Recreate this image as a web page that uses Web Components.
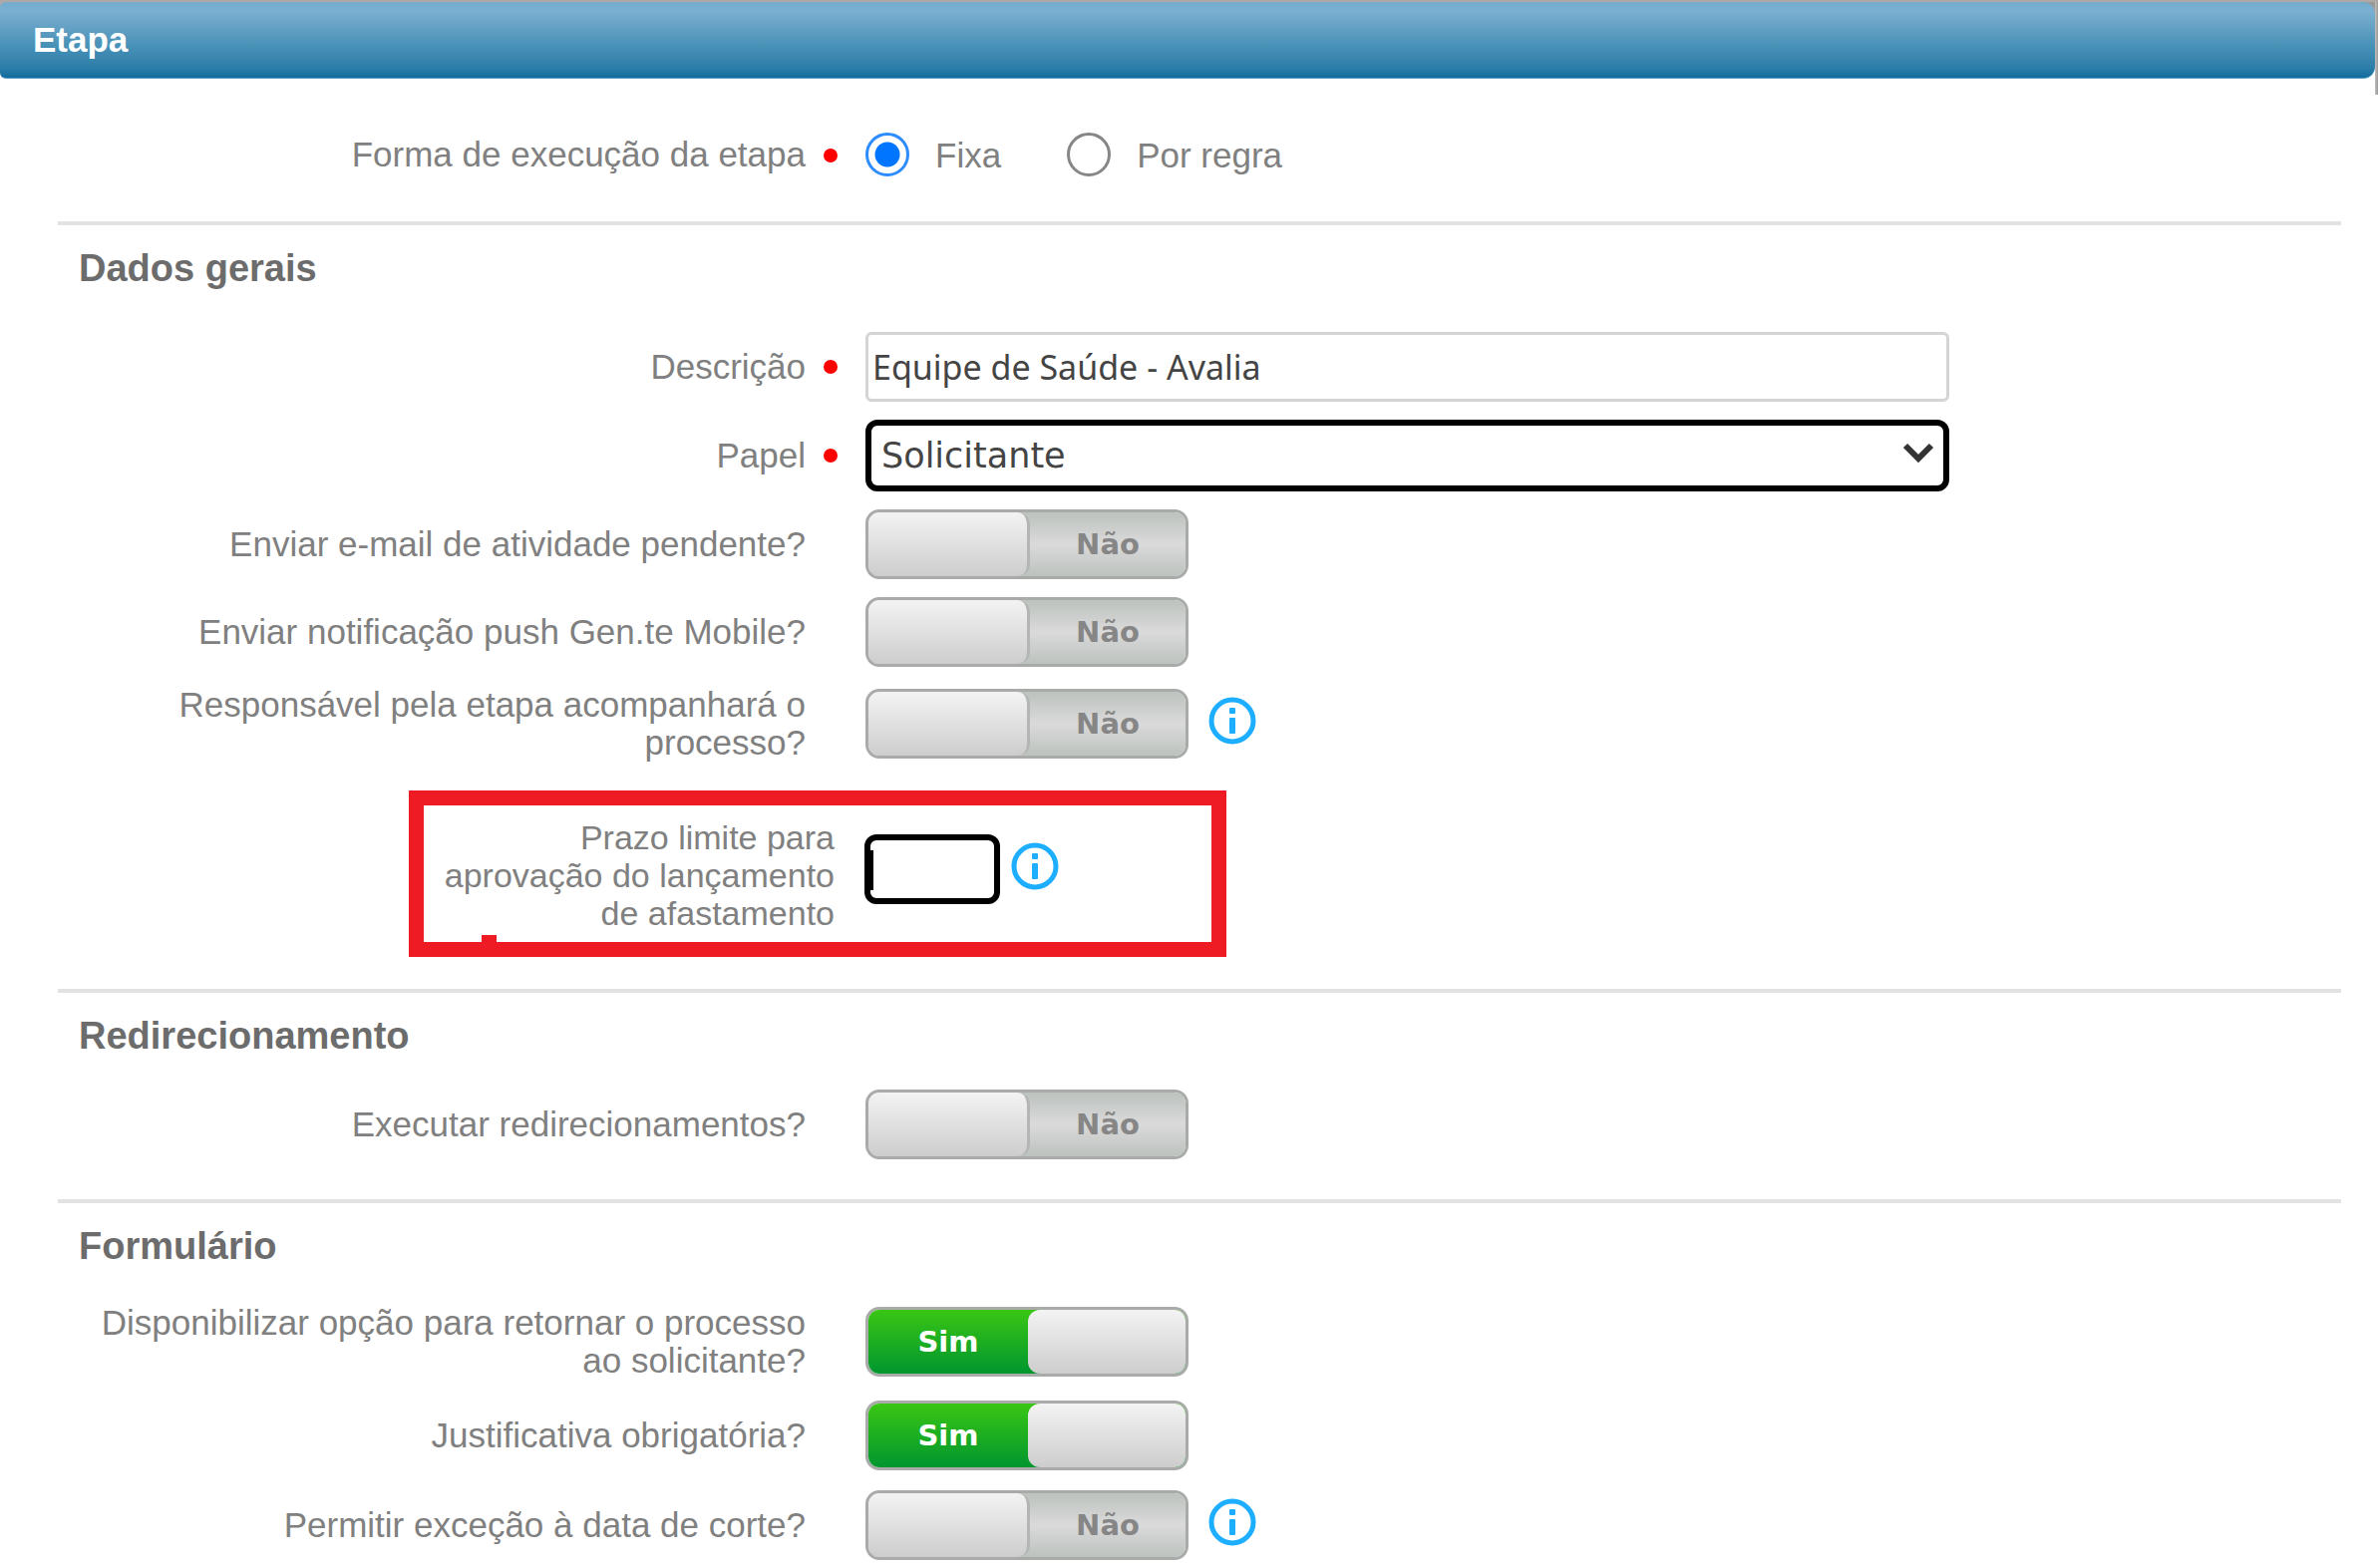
<!DOCTYPE html>
<html lang="pt-BR">
<head>
<meta charset="utf-8">
<title>Etapa</title>
<style>
  body {
    margin: 0;
    background: #fff;
    color: #808080;
    font: 35px/38px "Liberation Sans", Arial, sans-serif;
  }
</style>
</head>
<body>
<step-panel heading="Etapa">
  <form-section>
    <radio-field label="Forma de execução da etapa" options="Fixa|Por regra"></radio-field>
  </form-section>
  <form-section heading="Dados gerais" style="--head-gap: 40px">
    <text-field label="Descrição" value="Equipe de Saúde - Avalia"></text-field>
    <select-field label="Papel" value="Solicitante"></select-field>
    <toggle-field label="Enviar e-mail de atividade pendente?"></toggle-field>
    <toggle-field label="Enviar notificação push Gen.te Mobile?"></toggle-field>
    <toggle-field label="Responsável pela etapa acompanhará o processo?" info></toggle-field>
    <deadline-field label="Prazo limite para aprovação do lançamento de afastamento"></deadline-field>
  </form-section>
  <form-section heading="Redirecionamento" style="--head-gap: 30px; --foot-gap: 40px">
    <toggle-field label="Executar redirecionamentos?"></toggle-field>
  </form-section>
  <form-section heading="Formulário" style="--head-gap: 33px; --row-gap: 20px; --foot-gap: 0px">
    <toggle-field label="Disponibilizar opção para retornar o processo ao solicitante?" on></toggle-field>
    <toggle-field label="Justificativa obrigatória?" on></toggle-field>
    <toggle-field label="Permitir exceção à data de corte?" info></toggle-field>
  </form-section>
</step-panel>

<script>
const base = `
  *, *::before, *::after { box-sizing: border-box; }
  :host { display: block; }
  input, select { font: inherit; color: inherit; margin: 0; }
`;

// Common row: right-aligned caption, narrow marker column, control.
const rowCss = base + `
  .row { display: grid; grid-template-columns: 808px 60px minmax(0, 1fr); align-items: center; min-height: 70px; }
  .caption { justify-self: end; max-width: 716px; padding: 1px 0; text-align: right; }
  .mark { display: flex; padding-left: 18px; }
  .mark.required::before { content: ""; width: 14px; height: 14px; border-radius: 50%; background: #f00; }
  .control { display: flex; align-items: center; padding-right: 37px; }
`;

const make = (host, css, html) => {
  host.attachShadow({ mode: "open" }).innerHTML = `<style>${css}</style>${html}`;
};

customElements.define("info-icon", class extends HTMLElement {
  connectedCallback() {
    make(this, base + `:host { flex: none; padding-bottom: 6px; } svg { display: block; }`, `
      <svg width="48" height="48" viewBox="0 0 48 48" role="img" aria-label="Informação">
        <circle cx="24" cy="24" r="21" fill="none" stroke="#1eaeff" stroke-width="5"/>
        <rect x="21" y="11" width="6" height="6" rx="1" fill="#1eaeff"/>
        <rect x="21" y="21" width="6" height="16" rx="1" fill="#1eaeff"/>
      </svg>`);
  }
});

customElements.define("step-panel", class extends HTMLElement {
  connectedCallback() {
    make(this, base + `
      .frame { padding: 2px 3px 0 0; background: linear-gradient(#b0a8a5, #b0a8a5) top / 100% 2px no-repeat, linear-gradient(90deg, #c4c0be, #999) right top / 3px 95px no-repeat, linear-gradient(#999, #999) right top / 14px 14px no-repeat, linear-gradient(#aaa, #aaa) left top / 8px 8px no-repeat; }
      header { height: 77px; display: flex; align-items: center; padding: 0 33px 1px; color: #fff; border-bottom: 1px solid #5da2cb; border-radius: 6px 12px 12px 6px;
        background: linear-gradient(#74abcd, #7ab0d0 12%, #5b9bc0 42%, #4590b6 60%, #3a86af 74%, #2a7ca9 88%, #126b9c 100%); }
      h1 { margin: 0; font-size: 35px; line-height: 38px; font-weight: bold; }
      .edge { float: right; width: 3px; height: 16px; background: linear-gradient(90deg, #c4c0be, #999); }
    `, `
      <div class="frame"><header><h1>${this.getAttribute("heading")}</h1></header></div>
      <div class="edge"></div>
      <main><slot></slot></main>`);
  }
});

customElements.define("form-section", class extends HTMLElement {
  connectedCallback() {
    const heading = this.getAttribute("heading");
    make(this, base + `
      hr { margin: 0 37px 0 58px; height: 4px; border: 0; background: #e2e2e2; }
      h2 { margin: 19px 0 var(--head-gap) 79px; font-size: 38px; line-height: 48px; font-weight: bold; color: #6c6c6c; }
      .rows { display: flex; flex-direction: column; gap: var(--row-gap, 18px); padding-bottom: var(--foot-gap, 32px); }
      .lead { padding-top: 41px; }
    `, heading
      ? `<section><hr><h2>${heading}</h2><div class="rows"><slot></slot></div></section>`
      : `<section class="rows lead"><slot></slot></section>`);
  }
});

customElements.define("radio-field", class extends HTMLElement {
  connectedCallback() {
    const options = this.getAttribute("options").split("|").map((text, i) => `
      <label><input type="radio" name="mode" ${i ? "" : "checked"}><span>${text}</span></label>`).join("");
    make(this, rowCss + `
      .control { gap: 66px; }
      label { display: flex; align-items: center; gap: 26px; }
      input { appearance: none; width: 44px; height: 44px; border: 3px solid #868686; border-radius: 50%; background: #fff; }
      input:checked { border-color: #2d8cff; background: radial-gradient(circle, #0075ff 12px, #fff 13px); }
      span { padding-top: 2px; }
    `, `
      <div class="row" role="radiogroup" aria-labelledby="cap">
        <span class="caption" id="cap">${this.getAttribute("label")}</span>
        <span class="mark required"></span>
        <div class="control">${options}</div>
      </div>`);
  }
});

customElements.define("text-field", class extends HTMLElement {
  connectedCallback() {
    make(this, rowCss + `
      input { width: 100%; max-width: 1087px; height: 70px; padding: 0 4px; border: 3px solid #d4d4d4; border-radius: 6px; background: #fff; color: #444; font: 34px/46px "Noto Sans", sans-serif; outline: none; }
    `, `
      <div class="row">
        <label class="caption" for="f">${this.getAttribute("label")}</label>
        <span class="mark required"></span>
        <div class="control"><input id="f" type="text" value="${this.getAttribute("value")}"></div>
      </div>`);
  }
});

customElements.define("select-field", class extends HTMLElement {
  connectedCallback() {
    make(this, rowCss + `
      .box { position: relative; width: 100%; max-width: 1087px; }
      select { appearance: none; display: block; width: 100%; height: 72px; padding: 0 60px 0 10px; border: 6px solid #000; border-radius: 12px; background: #fff; color: #444; font: 35px/46px "DejaVu Sans", Verdana, sans-serif; outline: none; }
      svg { position: absolute; right: 14px; top: 22px; pointer-events: none; }
    `, `
      <div class="row">
        <label class="caption" for="f">${this.getAttribute("label")}</label>
        <span class="mark required"></span>
        <div class="control"><div class="box">
          <select id="f"><option>${this.getAttribute("value")}</option></select>
          <svg width="34" height="24" viewBox="0 0 34 24" aria-hidden="true"><path d="M4 4 17 17 30 4" fill="none" stroke="#333" stroke-width="6"/></svg>
        </div></div>
      </div>`);
  }
});

customElements.define("toggle-field", class extends HTMLElement {
  connectedCallback() {
    make(this, rowCss + `
      .control { gap: 20px; }
      .switch { position: relative; display: flex; flex: none; width: 324px; height: 70px; border: 3px solid #a9aba9; border-radius: 14px; overflow: hidden; font: bold 29px/34px "DejaVu Sans", Verdana, sans-serif; }
      input { position: absolute; inset: 0; width: 100%; height: 100%; opacity: 0; }
      .state { flex: 1; display: flex; align-items: center; justify-content: center; }
      .off { background: linear-gradient(#bcc2be, #dadada 50%, #bcc2be); color: #868686; }
      .on { display: none; background: linear-gradient(#3ac614, #00962f); color: #fff; }
      .fill { flex: 0 0 162px; display: flex; background: linear-gradient(#bcc2be, #dadada 50%, #bcc2be); }
      .knob { flex: 1; border-right: 3px solid #b4b6b4; border-radius: 10px 12px 12px 10px; background: linear-gradient(#f3f3f3, #cdcdcd); }
      input:checked ~ .on { display: flex; }
      input:checked ~ .off { display: none; }
      input:checked ~ .fill { flex-basis: 158px; background: linear-gradient(#3ac614, #00962f); }
      input:checked ~ .fill .knob { border-right: 0; border-radius: 12px 10px 10px 12px; }
    `, `
      <div class="row">
        <label class="caption" for="f">${this.getAttribute("label")}</label>
        <span class="mark"></span>
        <div class="control">
          <div class="switch">
            <input id="f" type="checkbox" role="switch" ${this.hasAttribute("on") ? "checked" : ""}>
            <span class="state on">Sim</span>
            <span class="fill"><span class="knob"></span></span>
            <span class="state off">Não</span>
          </div>
          ${this.hasAttribute("info") ? "<info-icon></info-icon>" : ""}
        </div>
      </div>`);
  }
});

// Numeric deadline inside a highlighted red frame.
customElements.define("deadline-field", class extends HTMLElement {
  connectedCallback() {
    make(this, base + `
      :host { padding: 10px 0 0 410px; }
      .frame { position: relative; display: flex; align-items: center; gap: 30px; width: 820px; max-width: 100%; min-height: 167px; border: 15px solid #ee1b24; }
      .frame::after { content: ""; position: absolute; left: 58px; bottom: 0; width: 15px; height: 7px; background: #ee1b24; }
      label { width: 412px; padding-top: 2px; font-size: 34px; text-align: right; }
      .control { display: flex; align-items: center; gap: 11px; padding-bottom: 9px; }
      input { width: 136px; height: 70px; padding: 0 6px; border: 6px solid #000; border-radius: 12px; outline: none; background: linear-gradient(#000, #000) 0 10px / 3px 40px no-repeat #fff; }
    `, `
      <div class="frame">
        <label for="f">${this.getAttribute("label")}</label>
        <div class="control"><input id="f" type="text" inputmode="numeric"><info-icon></info-icon></div>
      </div>`);
  }
});
</script>
</body>
</html>
